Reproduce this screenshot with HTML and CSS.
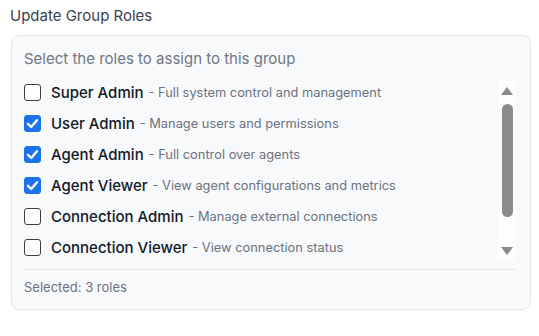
FILE: index.html
```html
<!DOCTYPE html>
<html>
<head>
<meta charset="utf-8">
<link rel="stylesheet" href="styles.css">
</head>
<body>
<div class="field">
  <div class="title">Update Group Roles</div>
  <div class="box">
    <div class="hint">Select the roles to assign to this group</div>
    <div class="list">
      <div class="rows">
        <label class="row"><span class="cb"></span><span class="name">Super Admin</span><span class="desc">- Full system control and management</span></label>
        <label class="row"><span class="cb on"><svg viewBox="0 0 17 17"><path d="M4 8.8 L7.2 12 L13 5.2" /></svg></span><span class="name">User Admin</span><span class="desc">- Manage users and permissions</span></label>
        <label class="row"><span class="cb on"><svg viewBox="0 0 17 17"><path d="M4 8.8 L7.2 12 L13 5.2" /></svg></span><span class="name">Agent Admin</span><span class="desc">- Full control over agents</span></label>
        <label class="row"><span class="cb on"><svg viewBox="0 0 17 17"><path d="M4 8.8 L7.2 12 L13 5.2" /></svg></span><span class="name">Agent Viewer</span><span class="desc">- View agent configurations and metrics</span></label>
        <label class="row"><span class="cb"></span><span class="name">Connection Admin</span><span class="desc">- Manage external connections</span></label>
        <label class="row"><span class="cb"></span><span class="name">Connection Viewer</span><span class="desc">- View connection status</span></label>
      </div>
      <div class="sbar">
        <span class="arrow up"></span>
        <span class="thumb"></span>
        <span class="spacer"></span>
        <span class="arrow down"></span>
      </div>
    </div>
    <div class="footer">Selected: 3 roles</div>
  </div>
</div>
</body>
</html>
```

FILE: styles.css
```css
* { box-sizing: border-box; }
html, body { margin: 0; background: #ffffff; }
body {
  font-family: Inter, "Noto Sans", "Liberation Sans", sans-serif;
  color: #111827;
}
.field {
  padding: 6px 8px 0 11px;
}
.title {
  font-size: 15px;
  line-height: 20px;
  color: #3b4250;
  margin-left: -1px;
  height: 29px;
}
.box {
  width: 520px;
  height: 275px;
  border: 1px solid #e4e6ea;
  border-radius: 8px;
  background: #f8f9fb;
  padding: 13px 14px 13px 12px;
  display: flex;
  flex-direction: column;
}
.hint {
  font-size: 15px;
  line-height: 20px;
  color: #707683;
}
.list {
  margin-top: 8px;
  height: 188px;
  display: flex;
}
.rows {
  flex: 1;
  display: flex;
  flex-direction: column;
}
.row {
  flex: 1;
  display: flex;
  align-items: center;
  white-space: nowrap;
}
.cb {
  width: 17px;
  height: 17px;
  border: 1.5px solid #3a3f47;
  border-radius: 3px;
  background: #ffffff;
  margin-right: 10px;
  flex: none;
  display: flex;
}
.cb.on {
  background: #1a73e8;
  border-color: #1a73e8;
}
.cb svg {
  width: 17px;
  height: 17px;
  margin: -1.5px;
  fill: none;
  stroke: #ffffff;
  stroke-width: 2.4;
  stroke-linecap: round;
  stroke-linejoin: round;
}
.name {
  font-size: 15px;
  font-weight: 500;
  color: #111827;
}
.desc {
  font-size: 12.85px;
  color: #6b7280;
  margin-left: 5px;
}
.sbar {
  width: 18px;
  margin: 4px 0 3px 0;
  background: #fdfdfe;
  display: flex;
  flex-direction: column;
  align-items: center;
}
.arrow {
  width: 0;
  height: 0;
  border-left: 6.5px solid transparent;
  border-right: 6.5px solid transparent;
  flex: none;
}
.arrow.up {
  margin-top: 6px;
  border-bottom: 8px solid #8a8a8a;
}
.arrow.down {
  margin-bottom: 5px;
  border-top: 8px solid #8a8a8a;
}
.thumb {
  width: 11px;
  height: 113px;
  margin-top: 9px;
  border-radius: 6px;
  background: #8b8b8b;
  flex: none;
}
.spacer { flex: 1; }
.footer {
  margin-top: 6px;
  border-top: 1px solid #e3e5e9;
  padding-top: 8px;
  font-size: 13px;
  line-height: 18px;
  color: #6b7280;
}
```
